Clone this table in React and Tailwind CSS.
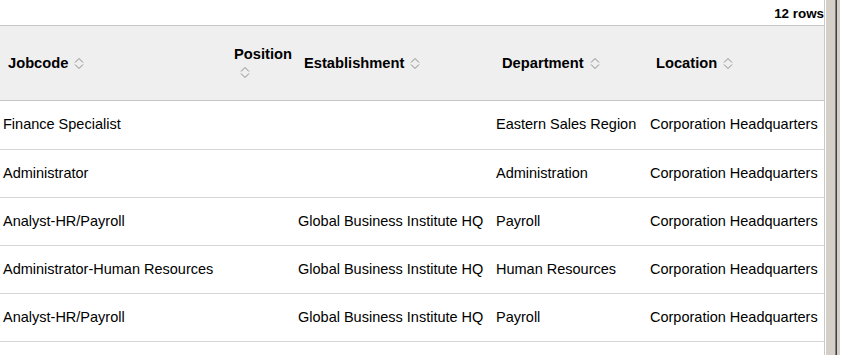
const rows = [
    { jobcode: 'Finance Specialist', position: '', establishment: '', department: 'Eastern Sales Region', location: 'Corporation Headquarters' },
    { jobcode: 'Administrator', position: '', establishment: '', department: 'Administration', location: 'Corporation Headquarters' },
    { jobcode: 'Analyst-HR/Payroll', position: '', establishment: 'Global Business Institute HQ', department: 'Payroll', location: 'Corporation Headquarters' },
    { jobcode: 'Administrator-Human Resources', position: '', establishment: 'Global Business Institute HQ', department: 'Human Resources', location: 'Corporation Headquarters' },
    { jobcode: 'Analyst-HR/Payroll', position: '', establishment: 'Global Business Institute HQ', department: 'Payroll', location: 'Corporation Headquarters' },
];

const cols = 'grid grid-cols-[226px_70px_198px_154px_1fr]';

function SortIcon() {
    return (
        <svg width="10" height="13" viewBox="0 0 10 13" className="ml-[6px] inline-block align-middle -mt-[2px]">
            <path d="M1 5.5 L5 1.5 L9 5.5" fill="none" stroke="#8a8a8a" strokeWidth="1" />
            <path d="M1 7.5 L5 11.5 L9 7.5" fill="none" stroke="#8a8a8a" strokeWidth="1" />
        </svg>
    );
}

function HeaderCell({ label }) {
    return (
        <div className="flex items-center pl-[8px] pr-1">
            <span className="leading-[18px]">
                {label}
                <SortIcon />
            </span>
        </div>
    );
}

export default function App() {
    return (
        <div
            className="flex w-[841px] h-[355px] overflow-hidden bg-white text-black"
            style={{ fontFamily: '"Liberation Sans", Arial, sans-serif' }}
        >
            <div className="w-[825px] flex flex-col border-r border-[#c8c8c8]">
                <div className="h-[25px] flex items-center justify-end text-[13.4px] font-bold pt-[3px]">
                    12 rows
                </div>

                <div className={`${cols} h-[76px] bg-[#efefef] border-y border-[#c6c6c6] text-[14.7px] font-bold`}>
                    <HeaderCell label="Jobcode" />
                    <HeaderCell label="Position" />
                    <HeaderCell label="Establishment" />
                    <HeaderCell label="Department" />
                    <HeaderCell label="Location" />
                </div>

                {rows.map((row, i) => (
                    <div
                        key={i}
                        className={`${cols} ${i === 0 ? 'h-[49px]' : 'h-[48px]'} border-b border-[#d6d6d6] text-[14.5px] items-center`}
                    >
                        <div className="pl-[3px] whitespace-nowrap">{row.jobcode}</div>
                        <div className="pl-[2px] whitespace-nowrap">{row.position}</div>
                        <div className="pl-[2px] whitespace-nowrap">{row.establishment}</div>
                        <div className="pl-[2px] whitespace-nowrap">{row.department}</div>
                        <div className="pl-[2px] whitespace-nowrap">{row.location}</div>
                    </div>
                ))}
            </div>

            <div className="flex h-full">
                <div className="w-px bg-white" />
                <div className="w-[9px] bg-[#d4d0c8]" />
                <div className="w-px bg-[#808080]" />
                <div className="w-px bg-[#404040]" />
                <div className="w-[3px] bg-[#d4d0c8]" />
            </div>
        </div>
    );
}
